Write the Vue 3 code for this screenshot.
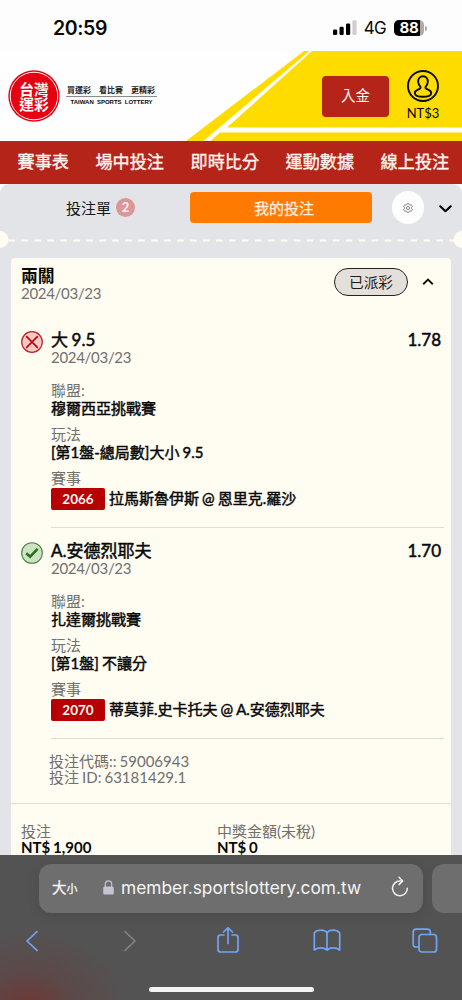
<script setup>
const navItems = ['賽事表', '場中投注', '即時比分', '運動數據', '線上投注']

const bets = [
  {
    won: false,
    pick: '大 9.5',
    date: '2024/03/23',
    odds: '1.78',
    league: '穆爾西亞挑戰賽',
    market: '[第1盤-總局數]大小 9.5',
    code: '2066',
    match: '拉馬斯魯伊斯 @ 恩里克.羅沙',
  },
  {
    won: true,
    pick: 'A.安德烈耶夫',
    date: '2024/03/23',
    odds: '1.70',
    league: '扎達爾挑戰賽',
    market: '[第1盤] 不讓分',
    code: '2070',
    match: '蒂莫菲.史卡托夫 @ A.安德烈耶夫',
  },
]
</script>

<template>
  <div class="screen">
    <div class="status">
      <span class="clock">20:59</span>
      <div class="status-right">
        <svg class="signal" width="24" height="16" viewBox="0 0 24 16">
          <rect x="0" y="9.6" width="4.2" height="5.4" rx="1.2" />
          <rect x="6.5" y="6.8" width="4.2" height="8.2" rx="1.2" />
          <rect x="13" y="3.6" width="4.2" height="11.4" rx="1.2" />
          <rect x="19.4" y="0.2" width="4.2" height="14.8" rx="1.2" fill="#cfcfcf" />
        </svg>
        <span class="net">4G</span>
        <div class="battery"><span>88</span></div>
        <i class="battery-tip"></i>
      </div>
    </div>

    <header class="brand">
      <svg class="brand-bg" width="462" height="90" viewBox="0 0 462 90">
        <path d="M304 0H462V90H186Z" fill="#ffdc00" />
        <path d="M309.500 0H312L227 76.500H462V81.500H220L210.500 90H203.500Z" fill="#fff" />
      </svg>
      <div class="seal">
        <svg width="52" height="52" viewBox="0 0 52 52">
          <circle cx="26" cy="26" r="25.700" fill="#e60012" />
          <circle cx="26" cy="26" r="23.800" fill="none" stroke="#fff" stroke-width="1" />
        </svg>
        <div class="seal-text">台灣<br>運彩</div>
      </div>
      <div class="slogan">
        <div class="slogan-zh"><span>買運彩</span><span>看比賽</span><span>更精彩</span></div>
        <div class="slogan-en">TAIWAN SPORTS LOTTERY</div>
      </div>
      <div class="deposit">入金</div>
      <div class="account">
        <svg width="32" height="32" viewBox="0 0 32 32" fill="none" stroke="#0b0b00" stroke-width="1.900" stroke-linejoin="round">
          <circle cx="16" cy="16" r="15" />
          <path d="M16 6.300C12.700 6.300 10.900 8.900 11.200 12C11.400 14.500 12.700 16.200 13.500 17C13.900 18.700 12.700 19 10.500 19.800C8.400 20.700 7.500 22 7.900 23.600C8.200 25.300 11.300 26.700 16 26.700S23.800 25.300 24.100 23.600C24.500 22 23.600 20.700 21.500 19.800C19.300 19 18.100 18.700 18.500 17C19.300 16.200 20.600 14.500 20.800 12C21.100 8.900 19.300 6.300 16 6.300Z" />
        </svg>
        <span>NT$3</span>
      </div>
    </header>

    <nav class="nav">
      <span v-for="item in navItems" :key="item">{{ item }}</span>
    </nav>

    <main class="slip">
      <div class="slip-head">
        <div class="tabs">
          <div class="tab"><span>投注單</span><b class="count">2</b></div>
          <div class="tab active">我的投注</div>
          <div class="gear">
            <svg width="10" height="10" viewBox="0 0 10 10" fill="none" stroke="#666" stroke-width="0.800">
              <path d="M4 .7h2l.4 1 .9.400 1.100-.3 1 1.700-.7.900v1.200l.7.900-1 1.700-1.100-.3-.9.400L6 9.300H4l-.4-1-.9-.4-1.100.3-1-1.700.7-.9V4.400L.6 3.500l1-1.700 1.100.3.900-.4Z" />
              <circle cx="5" cy="5" r="1.600" />
            </svg>
          </div>
          <svg class="chev" width="13" height="8" viewBox="0 0 13 8" fill="none" stroke="#000" stroke-width="2.100" stroke-linecap="round" stroke-linejoin="round">
            <path d="M1.300 1.300L6.500 6.200L11.700 1.300" />
          </svg>
        </div>
        <svg class="perforation" width="462" height="18" viewBox="0 0 462 18">
          <path d="M8.500 9.500H454" stroke="#fffcf2" stroke-width="1.900" stroke-dasharray="6.600 6.370" />
          <circle cx="0" cy="8.500" r="8.500" fill="#fffcf2" />
          <circle cx="462" cy="8.500" r="8.500" fill="#fffcf2" />
        </svg>
      </div>

      <section class="card">
        <div class="card-head">
          <div>
            <div class="card-title">兩關</div>
            <div class="date">2024/03/23</div>
          </div>
          <div class="card-state">
            <span class="pill">已派彩</span>
            <svg width="12" height="8" viewBox="0 0 12 8" fill="none" stroke="#111" stroke-width="1.900">
              <path d="M1.200 6.200L6 1.500L10.800 6.200" />
            </svg>
          </div>
        </div>

        <article v-for="bet in bets" :key="bet.code" class="bet">
          <svg class="result" width="22" height="22" viewBox="0 0 22 22" fill="none">
            <template v-if="bet.won">
              <circle cx="11" cy="11" r="10.300" fill="#cfe3c4" stroke="#438341" stroke-width="1.100" />
              <path d="M5.300 11.200L9.100 14.700L16.600 6.800" stroke="#24731b" stroke-width="2.600" />
            </template>
            <template v-else>
              <circle cx="11" cy="11" r="10.300" fill="#f6cbc3" stroke="#bf2026" stroke-width="1.200" />
              <path d="M5.200 5.200L16.800 16.800M16.800 5.200L5.200 16.800" stroke="#bd0713" stroke-width="1.700" />
            </template>
          </svg>
          <div class="bet-body">
            <div class="bet-top"><span class="pick">{{ bet.pick }}</span><span class="odds">{{ bet.odds }}</span></div>
            <div class="date">{{ bet.date }}</div>
            <dl>
              <dt>聯盟:</dt>
              <dd>{{ bet.league }}</dd>
              <dt>玩法</dt>
              <dd>{{ bet.market }}</dd>
              <dt>賽事</dt>
            </dl>
            <div class="match"><b>{{ bet.code }}</b><span>{{ bet.match }}</span></div>
          </div>
        </article>

        <div class="refs">
          <div>投注代碼:: 59006943</div>
          <div>投注 ID: 63181429.1</div>
        </div>

        <div class="totals">
          <div><div class="label">投注</div><div class="amount">NT$ 1,900</div></div>
          <div><div class="label">中獎金額(未稅)</div><div class="amount">NT$ 0</div></div>
        </div>
      </section>
    </main>

    <footer class="browser">
      <div class="address-row">
        <div class="address">
          <span class="aa">大<small>小</small></span>
          <svg class="lock" width="11" height="15" viewBox="0 0 11 15">
            <path d="M2.300 7V4.200a3.200 3.400 0 0 1 6.400 0V7" fill="none" stroke="#c6c4d2" stroke-width="1.200" />
            <rect x="0.200" y="6.400" width="10.600" height="8.200" rx="1.600" fill="#c6c4d2" />
          </svg>
          <span class="url">member.sportslottery.com.tw</span>
          <svg class="reload" width="18" height="21" viewBox="0 0 18 21" fill="none" stroke="#f1f1f1" stroke-width="1.500" stroke-linecap="round" stroke-linejoin="round">
            <path d="M10.500 5H9A7.400 7.400 0 1 0 16.300 12.300" />
            <path d="M8 1.200L11.700 5L8 8.600" />
          </svg>
        </div>
        <div class="next-tab"></div>
      </div>
      <div class="tools">
        <svg width="14" height="22" viewBox="0 0 14 22"><path d="M12 1.700L2 11L12 20.300" /></svg>
        <svg class="dim" width="14" height="22" viewBox="0 0 14 22"><path d="M2 1.700L12 11L2 20.300" /></svg>
        <svg width="22" height="28" viewBox="0 0 22 28"><path d="M7 8H3.500Q1 8 1 10.500V22.500Q1 25 3.500 25H18.500Q21 25 21 22.500V10.500Q21 8 18.500 8H15M11 16.500V1M6.500 5L11 0.800L15.500 5" /></svg>
        <svg width="28" height="24" viewBox="0 0 28 24"><path d="M14 4V21M14 4Q12.300 1.200 7.800 1.200Q3.500 1.200 1.300 4V21Q4 18.800 7.800 18.800Q11.600 18.800 14 21Q16.400 18.800 20.200 18.800Q24 18.800 26.700 21V4Q24.500 1.200 20.200 1.200Q15.700 1.200 14 4Z" /></svg>
        <svg width="26" height="26" viewBox="0 0 26 26"><path d="M7 19H4Q1.200 19 1.200 16.200V4Q1.200 1.200 4 1.200H15.500Q18.300 1.200 18.300 4V6.500" /><rect x="7" y="6.500" width="17.500" height="17.500" rx="2.800" /></svg>
      </div>
      <div class="home"></div>
    </footer>
  </div>
</template>

<style>
body { margin: 0; background: #fff; }
</style>

<style scoped>
.screen {
  width: 462px;
  height: 1000px;
  display: flex;
  flex-direction: column;
  overflow: hidden;
  font-family: Lato, "Noto Sans CJK TC", sans-serif;
  color: #080808;
}
.status {
  height: 51px;
  flex: none;
  display: flex;
  justify-content: space-between;
  align-items: center;
  box-sizing: border-box;
  padding: 5px 35px 0 53px;
  background: #fdfdfd;
}
.clock { font: 600 19.500px/24px Inter, sans-serif; letter-spacing: -0.400px; }
.status-right { display: flex; align-items: center; }
.net { font: 400 17px/20px Inter, sans-serif; margin: 0 8px 0 7px; letter-spacing: -0.700px; }
.battery {
  width: 30px;
  height: 16px;
  border-radius: 5px;
  background: linear-gradient(90deg, #000 87%, #aaa 87%);
  display: flex;
  align-items: center;
  justify-content: center;
}
.battery span { font: 700 15px/16px Inter, sans-serif; color: #fff; letter-spacing: -0.300px; }
.battery-tip { width: 2px; height: 5px; margin-left: 1px; border-radius: 0 2px 2px 0; background: #aaa; }

.brand { position: relative; height: 90px; flex: none; display: flex; background: #fefefe; }
.brand-bg { position: absolute; left: 0; top: 0; }
.seal { position: relative; width: 52px; height: 52px; margin: 19px 0 0 8px; }
.seal-text {
  position: absolute;
  inset: 0;
  padding-top: 11px;
  text-align: center;
  color: #fff;
  font: 700 14.800px/15px "Noto Sans CJK TC", sans-serif;
}
.slogan { width: 91px; margin: 32px 0 0 6px; }
.slogan-zh {
  display: flex;
  justify-content: space-between;
  padding: 0 2px 0 1px;
  font: 700 8px/13px "Noto Sans CJK TC", sans-serif;
  color: #222;
}
.slogan-en {
  border-top: 1px solid #8c8c8c;
  font: 700 6px/11px "Liberation Sans", sans-serif;
  text-align: center;
  white-space: nowrap;
  word-spacing: 1.500px;
}
.deposit {
  position: relative;
  width: 67px;
  height: 41px;
  margin: 24.500px 0 0 165px;
  border-radius: 4px;
  background: #b42419;
  color: #fff5ef;
  font-size: 14.500px;
  line-height: 40px;
  text-align: center;
}
.account { position: relative; margin: 19px 0 0 18px; width: 32px; display: flex; flex-direction: column; align-items: center; }
.account svg { flex: none; }
.account span { font-size: 13px; line-height: 18px; margin-top: 2px; }

.nav {
  height: 43px;
  flex: none;
  display: flex;
  gap: 26.500px;
  box-sizing: border-box;
  padding: 0 0 1px 17.500px;
  background: #b42419;
  color: #fff4ef;
  font-size: 17.150px;
  line-height: 42px;
  white-space: nowrap;
  -webkit-text-stroke: 0.350px #fff4ef;
}

.slip { flex: 1; min-height: 0; overflow: hidden; background: #e2e4e7; border-radius: 9px 9px 0 0; word-spacing: -0.800px; }
.tabs { display: flex; align-items: center; height: 47px; }
.tab {
  width: 190px;
  box-sizing: border-box;
  padding-left: 11px;
  display: flex;
  align-items: center;
  justify-content: center;
  gap: 5px;
  font-size: 15px;
  line-height: 30px;
  color: #151719;
}
.tab.active {
  width: 182px;
  height: 30.500px;
  padding-left: 6px;
  border-radius: 4px;
  background: #ff7a00;
  color: #fff1e0;
  -webkit-text-stroke: 0.250px #fff1e0;
}
.count {
  width: 19px;
  height: 19px;
  border-radius: 50%;
  background: #d9979a;
  color: #fff1f0;
  font-size: 13px;
  line-height: 19px;
  text-align: center;
}
.gear {
  width: 32.500px;
  height: 32.500px;
  margin-left: 19.500px;
  border-radius: 50%;
  background: #fdfdfe;
  display: flex;
  align-items: center;
  justify-content: center;
}
.chev { margin: 2px 0 0 15px; }
.perforation { display: block; }

.card { margin: 9px 11px 0 11px; border-radius: 4px 4px 0 0; background: #fffcf2; }
.card-head { height: 59.250px; box-sizing: border-box; padding: 8px 17px 0 10px; display: flex; justify-content: space-between; }
.card-title { font-size: 16.800px; line-height: 19px; font-weight: 700; }
.date { color: #70706d; font-size: 15px; line-height: 16px; letter-spacing: -0.300px; }
.card-state { display: flex; gap: 14px; height: 32px; align-items: center; }
.pill {
  width: 74px;
  height: 28px;
  box-sizing: border-box;
  border: 1.200px solid #222;
  border-radius: 14px;
  background: #e4dfda;
  color: #1c1c1c;
  font-size: 14.700px;
  line-height: 26px;
  text-align: center;
}
.bet { display: flex; padding: 12.500px 7px 0 9.500px; height: 210.750px; box-sizing: border-box; }
.result { flex: none; margin: 1px 8.500px 0 0; }
.bet-body { flex: 1; border-bottom: 1px solid #dedcd6; }
.bet-top {
  display: flex;
  justify-content: space-between;
  font-size: 17px;
  line-height: 19px;
  -webkit-text-stroke: 0.500px #080808;
}
.odds { padding-right: 3px; }
dl { margin: 16px 0 0; font-size: 15px; line-height: 18px; }
dt { color: #70706d; }
dd { margin: 0 0 8px; -webkit-text-stroke: 0.450px #080808; }
.match { display: flex; align-items: center; gap: 4px; margin-top: 1px; height: 22px; font-size: 15px; white-space: nowrap; }
.match span { line-height: 21px; -webkit-text-stroke: 0.450px #080808; }
.match b {
  width: 54px;
  border-radius: 2px;
  background: #b70004;
  color: #fff4ef;
  font-size: 13.500px;
  line-height: 22px;
  text-align: center;
}
.refs { height: 65px; box-sizing: border-box; padding: 14px 0 0 38px; border-bottom: 1px solid #dedcd6; color: #70706d; font-size: 15px; line-height: 16px; }
.totals { display: grid; grid-template-columns: 196px 1fr; padding: 19px 0 20px 10px; font-size: 15px; line-height: 16px; }
.label { color: #70706d; }
.amount { font-weight: 700; }

.browser {
  height: 145px;
  flex: none;
  overflow: hidden;
  background: radial-gradient(ellipse 100px 75px at 27px 150px, #6e3836, rgba(97, 66, 65, 0.600) 45%, rgba(84, 83, 83, 0)), #545353;
}
.address-row { display: flex; gap: 9px; padding: 9px 0 0 39px; }
.address {
  width: 384px;
  height: 48.500px;
  flex: none;
  box-sizing: border-box;
  padding: 0 14px 0 13px;
  border-radius: 12px;
  background: #6e6e6e;
  box-shadow: 0 2px 12px rgba(0, 0, 0, 0.120);
  display: flex;
  align-items: center;
  color: #f4f4f4;
}
.next-tab { width: 60px; height: 48.500px; flex: none; border-radius: 12px; background: #6e6e6e; }
.aa { width: 51px; font-size: 14.500px; line-height: 20px; -webkit-text-stroke: 0.300px #f4f4f4; }
.aa small { font-size: 11px; }
.lock { flex: none; margin-top: -1px; }
.url { margin-left: 7px; font: 400 17.350px/24px Inter, sans-serif; white-space: nowrap; }
.reload { margin-left: auto; margin-top: -3px; }
.tools {
  width: 492px;
  height: 44px;
  margin: 6px 0 0 -17.500px;
  display: grid;
  grid-template-columns: repeat(5, 98.400px);
  justify-items: center;
  align-items: center;
}
.tools svg { fill: none; stroke: #6fa5f5; stroke-width: 1.700; stroke-linecap: round; stroke-linejoin: round; }
.tools .dim { stroke: #828282; }
.home { width: 165px; height: 5px; margin: 24px auto 0; border-radius: 3px; background: #f4f2f1; }
</style>
